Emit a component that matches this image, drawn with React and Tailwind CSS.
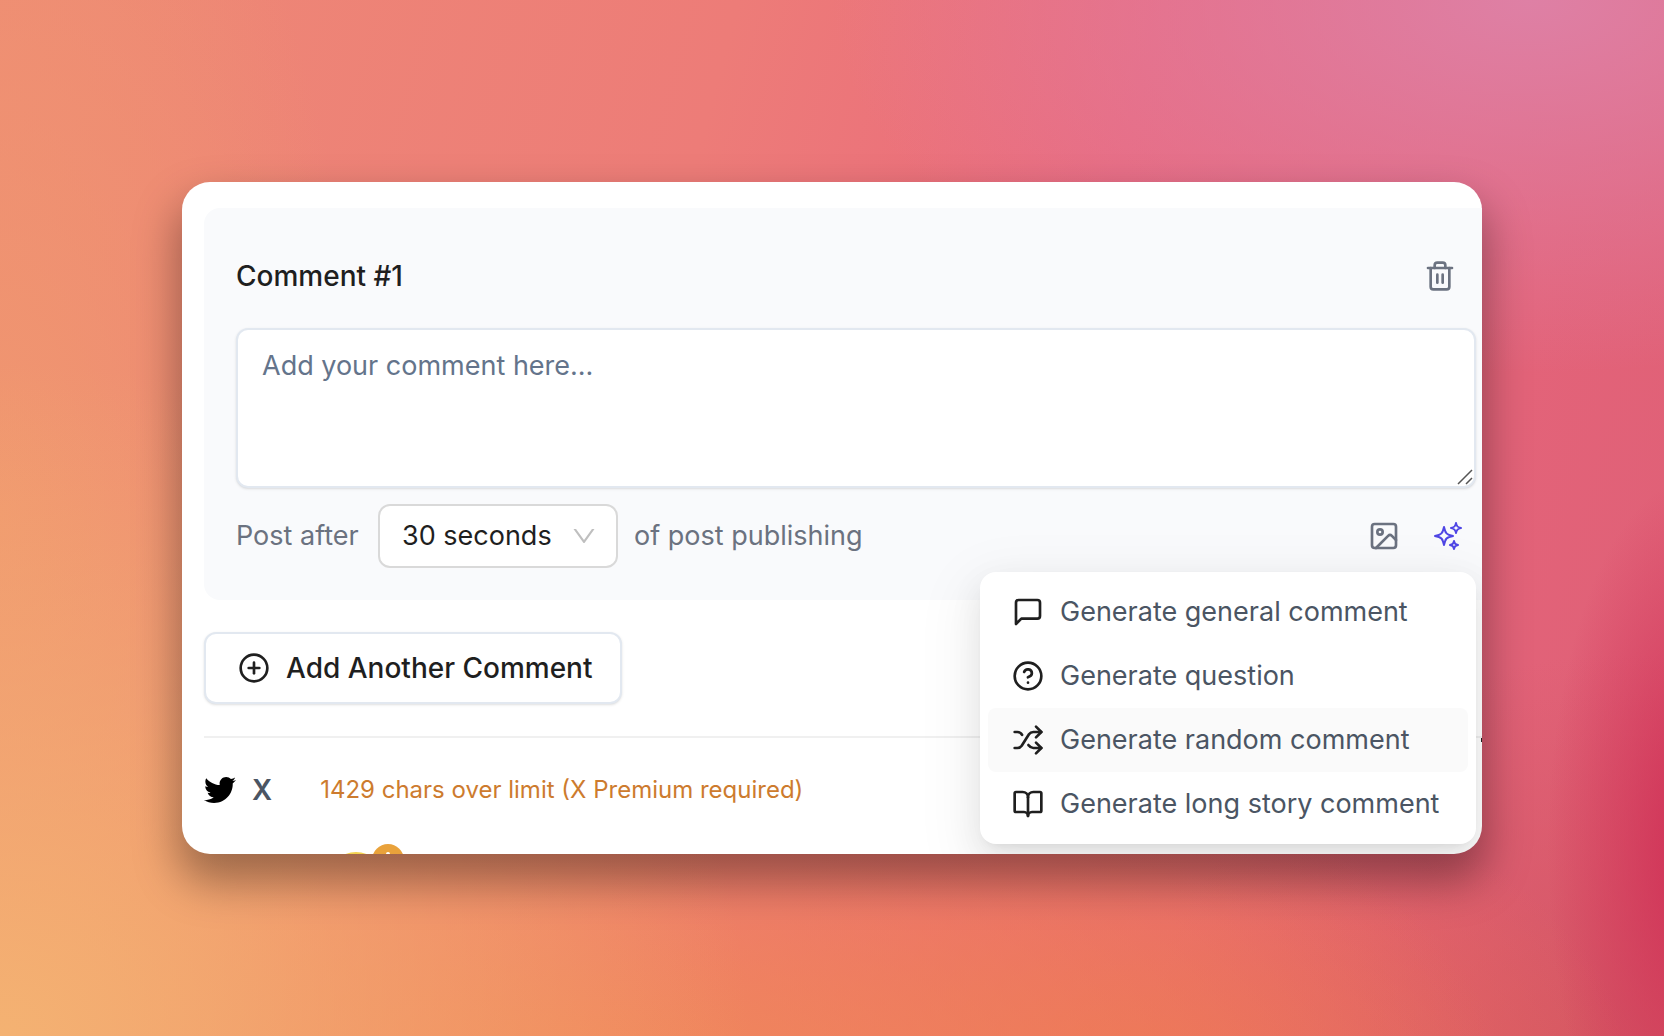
import { useState } from 'react';
import { BookOpen, CirclePlus, Image, Shuffle, Trash2 } from 'lucide-react';
import { FaTwitter } from 'react-icons/fa';
import { HiOutlineSparkles } from 'react-icons/hi2';
import { AiOutlineDown } from 'react-icons/ai';

function MessageIcon() {
  return (
    <svg
      viewBox="0 0 24 24"
      className="size-8 shrink-0 text-[#1f1f1f]"
      fill="none"
      stroke="currentColor"
      strokeWidth="2"
      strokeLinecap="round"
      strokeLinejoin="round"
    >
      <path d="M21 15a2 2 0 0 1-2 2H7l-4 4V5a2 2 0 0 1 2-2h14a2 2 0 0 1 2 2z" />
    </svg>
  );
}

function QuestionIcon() {
  return (
    <svg
      viewBox="0 0 24 24"
      className="size-8 shrink-0 text-[#1f1f1f]"
      fill="none"
      stroke="currentColor"
      strokeWidth="2"
      strokeLinecap="round"
      strokeLinejoin="round"
    >
      <circle cx="12" cy="12" r="10" />
      <path d="M9.09 9a3 3 0 0 1 5.83 1c0 2-3 3-3 3" />
      <path d="M12 17h.01" />
    </svg>
  );
}

const MENU_ITEMS = [
  { label: 'Generate general comment', icon: <MessageIcon /> },
  { label: 'Generate question', icon: <QuestionIcon /> },
  {
    label: 'Generate random comment',
    icon: <Shuffle className="size-8 shrink-0 text-[#1f1f1f]" />,
    active: true,
  },
  {
    label: 'Generate long story comment',
    icon: <BookOpen className="size-8 shrink-0 text-[#1f1f1f]" />,
  },
];

export default function App() {
  const [comment, setComment] = useState('');
  const [delay, setDelay] = useState('30');

  return (
    <div className="relative isolate flex min-h-screen items-center justify-center overflow-hidden bg-[#eb7876] px-[182px] font-[Inter,sans-serif]">
      {/* Backdrop */}
      <div className="absolute inset-0 -z-10 bg-[radial-gradient(ellipse_9%_36%_at_102%_82%,#d02f56_0%,#d02f5600_100%),radial-gradient(ellipse_42%_36%_at_92%_0%,#de80a5_0%,#de80a500_100%),radial-gradient(ellipse_45%_65%_at_0%_100%,#f4b272_0%,#f4b27200_100%),radial-gradient(ellipse_22%_80%_at_0%_50%,#f0976f_0%,#f0976f00_100%),radial-gradient(ellipse_55%_45%_at_36%_108%,#f18a56_0%,#f18a5600_100%),radial-gradient(ellipse_30%_30%_at_68%_104%,#ec6f58_0%,#ec6f5800_100%),radial-gradient(ellipse_30%_45%_at_98%_108%,#d2545f_0%,#d2545f00_100%),linear-gradient(105deg,#ee8a75_0%,#ed7c78_38%,#ea697d_60%,#de5f76_100%)]" />

      {/* Card */}
      <div className="relative w-full rounded-[28px] bg-white shadow-[0_24px_44px_4px_rgba(0,0,0,0.35)]">
        <div className="overflow-hidden rounded-[28px] pt-[26px] pl-[22px]">
          <section className="rounded-l-2xl bg-[#f9fafc] pt-10 pr-[6px] pb-8 pl-8">
            <div className="flex items-center justify-between pr-5">
              <h2 className="text-[28px] leading-14 font-medium text-[#1f1f1f]">Comment #1</h2>
              <button type="button" aria-label="Delete comment" className="text-[#6b7280]">
                <Trash2 className="size-8" />
              </button>
            </div>

            <div className="relative mt-6">
              <textarea
                aria-label="Comment"
                value={comment}
                onChange={(e) => setComment(e.target.value)}
                placeholder="Add your comment here..."
                className="block h-40 w-full resize-none rounded-xl border-2 border-[#e2e8f0] bg-white px-6 py-4 text-[27px] leading-10 text-[#1f1f1f] shadow-sm placeholder:text-[#64748b] focus:outline-none"
              />
              <svg
                viewBox="0 0 16 16"
                className="pointer-events-none absolute right-[3px] bottom-[3px] size-4 text-[#555555]"
                fill="none"
                stroke="currentColor"
                strokeWidth="1.5"
              >
                <path d="M1 15 15 1M9 15l6-6" />
              </svg>
            </div>

            <div className="mt-4 flex items-center justify-between pr-3">
              <div className="flex items-center gap-4 text-[27px] leading-10 text-[#6b7280]">
                <label htmlFor="delay" className="min-w-[126px]">Post after</label>
                <div className="relative">
                  <select
                    id="delay"
                    value={delay}
                    onChange={(e) => setDelay(e.target.value)}
                    className="h-16 w-60 appearance-none rounded-xl border-2 border-[#d9d9d9] bg-white pl-[22px] text-[#1f1f1f] focus:outline-none"
                  >
                    <option value="30">30 seconds</option>
                    <option value="60">60 seconds</option>
                  </select>
                  <AiOutlineDown className="pointer-events-none absolute inset-y-0 right-5 my-auto size-7 text-[#bfbfbf]" />
                </div>
                <span>of post publishing</span>
              </div>
              <div className="flex items-center gap-8">
                <button type="button" aria-label="Add image" className="text-[#6b7280]">
                  <Image className="size-8" />
                </button>
                <button type="button" aria-label="Generate with AI" className="text-[#4f46e5]">
                  <HiOutlineSparkles className="size-8" />
                </button>
              </div>
            </div>
          </section>

          <button
            type="button"
            className="mt-8 flex h-18 items-center gap-4 rounded-xl border-2 border-[#e2e8f0] bg-white pr-7 pl-8 text-[28px] font-medium text-[#1f1f1f] shadow-sm"
          >
            <CirclePlus className="size-8" />
            Add Another Comment
          </button>

          <div className="mt-8 h-[118px] overflow-hidden border-t-2 border-[#f0f0f0] pt-8">
            <div className="flex h-10 items-center">
              <FaTwitter className="size-8 text-black" />
              <span className="ml-4 text-[28px] font-semibold text-[#4b5563]">X</span>
              <span className="ml-12 text-2xl text-[#cd7b2e]">1429 chars over limit (X Premium required)</span>
            </div>
            {/* Warning row, cut off by the card edge */}
            <div className="mt-[34px] flex pl-31">
              <span className="mt-2 size-14 rounded-full bg-[#f3d24f]" />
              <span className="-ml-3 flex size-8 justify-center rounded-full bg-[#e9a23b] pt-2">
                <span className="h-3 w-1 rounded-full bg-white" />
              </span>
            </div>
          </div>
        </div>

        {/* AI menu, its shadow stays inside the card */}
        <div
          role="menu"
          className="absolute right-[6px] bottom-[10px] min-w-[496px] rounded-2xl bg-white p-2 shadow-[0_12px_32px_rgba(0,0,0,0.08),0_6px_12px_-8px_rgba(0,0,0,0.12),0_18px_56px_16px_rgba(0,0,0,0.05)] [clip-path:inset(-80px_-6px_-10px_-80px_round_0_0_28px_0)]"
        >
          {MENU_ITEMS.map(({ label, icon, active }) => (
            <button
              key={label}
              type="button"
              role="menuitem"
              className={`flex h-16 w-full items-center gap-4 rounded-lg px-6 text-[27px] whitespace-nowrap text-[#4b5563] ${
                active ? 'bg-[#fafafa]' : 'bg-white'
              }`}
            >
              {icon}
              {label}
            </button>
          ))}
        </div>

        {/* Tip of the scroll arrow at the card edge */}
        <span className="absolute right-0 bottom-28 h-1 w-px bg-[#1f1f1f]" />
      </div>
    </div>
  );
}
